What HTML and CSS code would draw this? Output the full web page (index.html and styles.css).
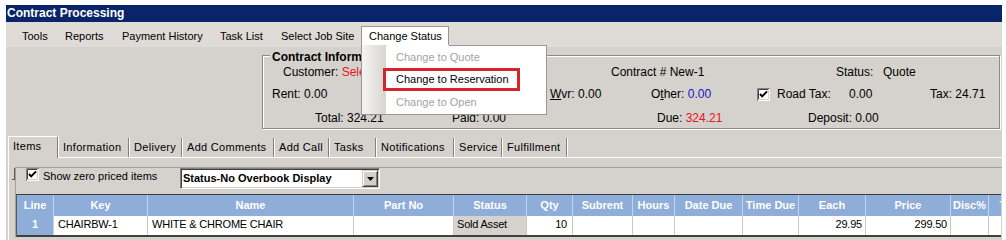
FILE: index.html
```html
<!DOCTYPE html>
<html>
<head>
<meta charset="utf-8">
<title>Contract Processing</title>
<link rel="stylesheet" href="styles.css">
</head>
<body>
<div class="window">
  <div class="titlebar">Contract Processing</div>
  <div class="menubar">
    <div class="mi w-tools">Tools</div>
    <div class="mi w-reports">Reports</div>
    <div class="mi w-pay">Payment History</div>
    <div class="mi w-task">Task List</div>
    <div class="mi w-site">Select Job Site</div>
    <div class="mi w-status open">Change Status
      <div class="dropdown">
        <div class="strip"></div>
        <div class="ddlist">
          <div class="dd-item">Change to Quote</div>
          <div class="dd-item sel">Change to Reservation</div>
          <div class="dd-item">Change to Open</div>
        </div>
      </div>
    </div>
  </div>

  <div class="group">
    <div class="legend">Contract Information</div>
    <div class="rows">
      <div class="row r1">
        <span class="f f-cust">Customer: <span class="red">Select Customer</span></span>
        <span class="f f-contract">Contract # New-1</span>
        <span class="f f-statlbl">Status:</span>
        <span class="f">Quote</span>
      </div>
      <div class="row r2">
        <span class="f f-rent">Rent: 0.00</span>
        <span class="f f-wvr"><u>W</u>vr: 0.00</span>
        <span class="f f-other">O<u>t</u>her: <span class="blue">0.00</span></span>
        <span class="f f-chk">
          <svg class="cb" width="13" height="13" viewBox="0 0 13 13"><rect width="13" height="13" fill="#fff"/><path d="M0.5 13V0.5H13" fill="none" stroke="#808080"/><path d="M1.5 12V1.5H12" fill="none" stroke="#404040"/><path d="M1 11.5H11.5V1" fill="none" stroke="#d4d0c8"/><polyline points="3,6 5.2,8.4 10,3.4" fill="none" stroke="#000" stroke-width="2"/></svg>
        </span>
        <span class="f f-road">Road Tax:</span>
        <span class="f f-roadval">0.00</span>
        <span class="f">Tax: 24.71</span>
      </div>
      <div class="row r3">
        <span class="f f-total">Total: 324.21</span>
        <span class="f f-paid">Paid: 0.00</span>
        <span class="f f-due">Due: <span class="red">324.21</span></span>
        <span class="f">Deposit: 0.00</span>
      </div>
    </div>
  </div>

  <div class="tabs">
    <div class="tab active t-items">Items</div>
    <div class="tab t-info">Information</div>
    <div class="tab t-del">Delivery</div>
    <div class="tab t-addc">Add Comments</div>
    <div class="tab t-call">Add Call</div>
    <div class="tab t-tasks">Tasks</div>
    <div class="tab t-notif">Notifications</div>
    <div class="tab t-serv">Service</div>
    <div class="tab t-ful">Fulfillment</div>
  </div>

  <div class="page">
    <div class="pane">
      <div class="toolbar">
        <div class="grip"></div>
        <svg class="cb tcb" width="13" height="13" viewBox="0 0 13 13"><rect width="13" height="13" fill="#fff"/><path d="M0.5 13V0.5H13" fill="none" stroke="#808080"/><path d="M1.5 12V1.5H12" fill="none" stroke="#404040"/><path d="M1 11.5H11.5V1" fill="none" stroke="#d4d0c8"/><polyline points="3,6 5.2,8.4 10,3.4" fill="none" stroke="#000" stroke-width="2"/></svg>
        <div class="tlabel">Show zero priced items</div>
        <div class="combo">
          <span class="combo-text">Status-No Overbook Display</span>
          <span class="combo-btn"><svg width="7" height="4" viewBox="0 0 7 4"><polygon points="0,0 7,0 3.5,4" fill="#000"/></svg></span>
        </div>
      </div>
      <div class="grid">
        <div class="grow ghead">
          <div>Line</div><div>Key</div><div>Name</div><div>Part No</div><div>Status</div><div>Qty</div><div>Subrent</div><div>Hours</div><div>Date Due</div><div>Time Due</div><div>Each</div><div>Price</div><div>Disc%</div><div>Tax</div>
        </div>
        <div class="grow gdata">
          <div class="c-line">1</div><div>CHAIRBW-1</div><div>WHITE &amp; CHROME CHAIR</div><div></div><div class="c-status">Sold Asset</div><div class="num qty">10</div><div></div><div></div><div></div><div></div><div class="num">29.95</div><div class="num">299.50</div><div></div><div></div>
        </div>
      </div>
    </div>
  </div>
</div>
</body>
</html>
```
FILE: styles.css
```css
body {
  margin: 0;
  background: #fff;
}

.window {
  margin: 5px 0 0 6px;
  width: 996px;
  height: 235px;
  background: #d5d1cc;
  overflow: hidden;
  font-family: "Liberation Sans", Arial, sans-serif;
  color: #000;
}

.titlebar {
  height: 17px;
  line-height: 17px;
  padding-left: 1px;
  background: #0a246a;
  color: #fff;
  font-weight: bold;
  font-size: 12px;
}

/* menu bar */
.menubar {
  display: flex;
  height: 25px;
  padding-left: 8px;
  background: #dfdbd6;
  font-size: 11px;
}
.mi {
  box-sizing: border-box;
  height: 20px;
  margin-top: 4px;
  padding-left: 7px;
  line-height: 19px;
  border: 1px solid transparent;
  border-bottom: 0;
  white-space: nowrap;
  flex-shrink: 0;
}
.w-tools { width: 43px; }
.w-reports { width: 57px; }
.w-pay { width: 98px; }
.w-task { width: 61px; }
.w-site { width: 88px; }
.w-status { width: 88px; }

.mi.open {
  position: relative;
  z-index: 5;
  background: #fff;
  border-color: #979797;
}
.dropdown {
  position: absolute;
  left: -1px;
  top: 18px;
  width: 186px;
  height: 70px;
  box-sizing: border-box;
  display: flex;
  border: 1px solid #979797;
  border-top: 0;
  background: #fff;
}
.dropdown::before {
  content: "";
  position: absolute;
  top: 0;
  left: 87px;
  right: -1px;
  height: 1px;
  background: #979797;
}
.strip {
  width: 24px;
  flex-shrink: 0;
  background: linear-gradient(to right, #f6f5f3, #d8d5d0);
}
.ddlist {
  flex: 1;
  padding-top: 1px;
}
.dd-item {
  height: 22px;
  line-height: 22px;
  padding-left: 10px;
  color: #a2a2a2;
  font-size: 11px;
  white-space: nowrap;
}
.dd-item.sel {
  box-sizing: border-box;
  width: 137px;
  height: 23px;
  margin-left: -3px;
  border: 3px solid #d7232e;
  line-height: 17px;
  color: #000;
}

/* contract information group */
.group {
  box-sizing: border-box;
  width: 738px;
  height: 74px;
  margin: 8px 0 0 256px;
  border: 1px solid #8e8b86;
  box-shadow: inset 1px 1px 0 #fff, 1px 1px 0 #fff;
  font-size: 12px;
}
.legend {
  width: max-content;
  height: 14px;
  margin: -6px 0 0 7px;
  padding: 0 2px;
  line-height: 14px;
  font-weight: bold;
  background: #d5d1cc;
  white-space: nowrap;
}
.rows { margin-top: -3px; }
.row {
  display: flex;
  height: 22px;
  line-height: 22px;
  white-space: nowrap;
}
.r1 { padding-left: 20px; }
.r2 { padding-left: 9px; }
.r3 { padding-left: 52px; padding-top: 2px; }
.f { flex-shrink: 0; }
.f-cust { width: 328px; }
.f-contract { width: 225px; }
.f-statlbl { width: 47px; }
.f-rent { width: 278px; }
.f-wvr { width: 101px; }
.f-other { width: 106px; }
.f-chk { width: 20px; display: flex; align-items: center; }
.f-road { width: 72px; }
.f-roadval { width: 81px; }
.f-total { width: 137px; }
.f-paid { width: 205px; }
.f-due { width: 151px; }
.red { color: #e5141e; }
.blue { color: #1414c8; }
.cb { display: block; flex-shrink: 0; }

/* tabs */
.tabs {
  display: flex;
  height: 21px;
  margin: 7px 0 0 2px;
  font-size: 11px;
  letter-spacing: 0.3px;
  white-space: nowrap;
}
.tab {
  box-sizing: border-box;
  flex-shrink: 0;
  height: 19px;
  margin-top: 2px;
  padding-left: 5px;
  line-height: 19px;
  border-right: 1px solid #808080;
  box-shadow: 1px 0 0 #fff;
}
.tab.active {
  position: relative;
  z-index: 1;
  height: 22px;
  margin-top: 0;
  padding-left: 4px;
  border-left: 1px solid #fff;
  border-top: 1px solid #fff;
  background: #d5d1cc;
}
.t-items { width: 50px; }
.t-info { width: 71px; }
.t-del { width: 53px; }
.t-addc { width: 92px; }
.t-call { width: 55px; }
.t-tasks { width: 47px; }
.t-notif { width: 78px; }
.t-serv { width: 48px; }
.t-ful { width: 65px; }

/* tab page */
.page {
  margin-left: 2px;
  padding: 9px 0 0 6px;
  height: 80px;
  border-top: 1px solid #fff;
  border-left: 1px solid #fff;
}
.pane {
  border-top: 1px solid #a3a09b;
  border-left: 1px solid #a3a09b;
}
.toolbar {
  display: flex;
  align-items: flex-start;
  height: 26px;
  font-size: 11px;
}
.grip {
  width: 2px;
  height: 11px;
  margin-left: -4px;
  border-right: 1px solid #5a5a5a;
  border-bottom: 1px solid #5a5a5a;
  flex-shrink: 0;
}
.tcb { margin-left: 11px; }
.tlabel {
  width: 137px;
  margin-left: 4px;
  line-height: 16px;
  white-space: nowrap;
  flex-shrink: 0;
}
.combo {
  box-sizing: border-box;
  width: 200px;
  height: 21px;
  display: flex;
  justify-content: space-between;
  padding: 1px 1px 1px 2px;
  border: 1px solid;
  border-color: #808080 #fff #fff #808080;
  box-shadow: inset 1px 1px 0 #404040, inset -1px -1px 0 #d4d0c8;
  background: #fff;
  flex-shrink: 0;
}
.combo-text {
  font-weight: bold;
  line-height: 17px;
  white-space: nowrap;
}
.combo-btn {
  box-sizing: border-box;
  width: 16px;
  height: 17px;
  display: flex;
  align-items: center;
  justify-content: center;
  background: #d4d0c8;
  border: 1px solid;
  border-color: #d4d0c8 #404040 #404040 #d4d0c8;
  box-shadow: inset 1px 1px 0 #fff, inset -1px -1px 0 #808080;
}
.combo-btn svg { display: block; }

/* grid */
.grid {
  width: 984px;
  overflow: hidden;
  border-top: 1px solid #3c3c3c;
  border-left: 1px solid #5a5a5a;
}
.grow {
  display: grid;
  grid-template-columns: 37px 94px 206px 100px 73px 46px 60px 42px 68px 56px 67px 85px 38px 40px;
  width: 1012px;
  font-size: 11px;
}
.ghead > div {
  box-sizing: border-box;
  height: 21px;
  line-height: 21px;
  background: #8eadd8;
  color: #fff;
  font-weight: bold;
  text-align: center;
  white-space: nowrap;
  border-right: 1px solid #c4d4ec;
}
.gdata { border-bottom: 2px solid #404040; }
.gdata > div {
  box-sizing: border-box;
  height: 19px;
  line-height: 17px;
  padding: 0 4px;
  background: #fff;
  white-space: nowrap;
  letter-spacing: -0.2px;
  border-right: 1px solid #c8c8c8;
}
.gdata > .c-line {
  background: #8eadd8;
  color: #fff;
  font-weight: bold;
  text-align: center;
  border-right-color: #c4d4ec;
}
.gdata > .c-status {
  background: #d6d3cf;
  padding-left: 3px;
}
.gdata > .num {
  text-align: right;
  padding-right: 3px;
}
.gdata > .qty { padding-right: 5px; }
```
